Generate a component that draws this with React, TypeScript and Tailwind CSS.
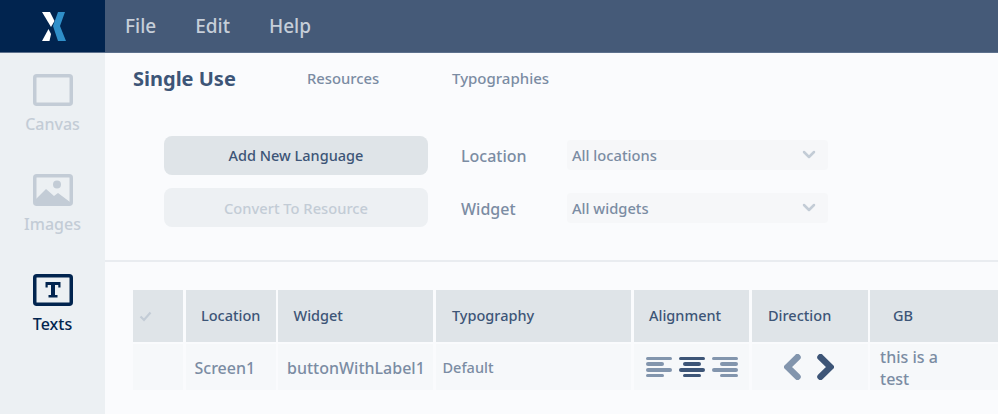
const FONT = "font-['Noto_Sans','Open_Sans',sans-serif]"

function Logo() {
    return (
        <svg width="24" height="29" viewBox="0 0 24 29">
            <path d="M0 0h8l4.5 9-3.5 6z" fill="#ffffff" />
            <path d="M0 29l6.5-12 2.5 5-1.5 7z" fill="#ffffff" />
            <path d="M16 0h7l-5 14 6 15h-8L11 14z" fill="#2f8fc9" />
        </svg>
    )
}

function CanvasIcon() {
    return (
        <svg width="40" height="32" viewBox="0 0 40 32">
            <rect x="1.75" y="1.75" width="36.5" height="28.5" rx="2" fill="none" stroke="#c3ccd6" strokeWidth="3.5" />
        </svg>
    )
}

function ImagesIcon() {
    return (
        <svg width="40" height="32" viewBox="0 0 40 32">
            <rect x="1.75" y="1.75" width="36.5" height="28.5" rx="2" fill="none" stroke="#c3ccd6" strokeWidth="3.5" />
            <circle cx="24" cy="10.5" r="4" fill="#c3ccd6" />
            <path d="M3 25l10-10 8 7 4-3 12 9v2H3z" fill="#c3ccd6" />
        </svg>
    )
}

function TextsIcon() {
    return (
        <svg width="40" height="32" viewBox="0 0 40 32">
            <rect x="1.75" y="1.75" width="36.5" height="28.5" rx="2" fill="none" stroke="#01244f" strokeWidth="3.5" />
            <path d="M12.500 8h15v5.500h-2.200V11h-3.300v10h2.500v2.500h-9V21H18V11h-3.300v2.500h-2.200z" fill="#01244f" />
        </svg>
    )
}

function AlignIcon({ widths, align, color }: { widths: number[]; align: string; color: string }) {
    return (
        <div className={`flex flex-col gap-[2px] w-[26.5px] ${align}`}>
            {widths.map((w, i) => (
                <div key={i} className={`h-[3.6px] rounded-full ${color}`} style={{ width: w }} />
            ))}
        </div>
    )
}

function Chevron({ left, color }: { left?: boolean; color: string }) {
    return (
        <svg width="17" height="26" viewBox="0 0 17 26">
            <path d={left ? 'M13.500 3.200L3.500 13l10 9.800' : 'M3.500 3.200l10 9.800-10 9.800'} fill="none" stroke={color} strokeWidth="6.500" strokeLinecap="round" strokeLinejoin="miter" />
        </svg>
    )
}

function Select({ label }: { label: string }) {
    return (
        <div className="w-[261px] h-[30px] bg-[#f6f7f9] rounded flex items-center justify-between pl-[5px] pr-[12px] text-[14.7px] font-medium text-[#7b8ca3]">
            {label}
            <svg width="14" height="10" viewBox="0 0 14 10">
                <path d="M2 2l5 5 5-5" fill="none" stroke="#c3ccd6" strokeWidth="2.500" strokeLinecap="round" strokeLinejoin="round" />
            </svg>
        </div>
    )
}

function SideItem({ label, active, children }: { label: string; active?: boolean; children: React.ReactNode }) {
    return (
        <div className="flex flex-col items-center h-[100px]">
            {children}
            <span className={`mt-[8px] text-[16px] font-medium leading-[20px] ${active ? 'text-[#01244f]' : 'text-[#c3ccd6]'}`}>{label}</span>
        </div>
    )
}

const headers = [
    { label: '', cls: '' },
    { label: 'Location', cls: 'pl-[15.5px]' },
    { label: 'Widget', cls: 'pl-[15.5px]' },
    { label: 'Typography', cls: 'pl-[16.5px]' },
    { label: 'Alignment', cls: 'pl-[15.5px]' },
    { label: 'Direction', cls: 'pl-[16.5px]' },
    { label: 'GB', cls: 'pl-[23px]' },
]

export default function App() {
    return (
        <div className={`w-[998px] h-[414px] overflow-hidden flex flex-col bg-[#fafbfd] ${FONT}`}>
            {/* Barra superior */}
            <div className="flex h-[53px] shrink-0 bg-[#455a78] border-b border-[#5d718d]">
                <div className="w-[105px] bg-[#01244f] flex items-center justify-center pl-[3px]">
                    <Logo />
                </div>
                <div className="flex items-center pl-[20px] gap-[39px] text-[19px] font-medium text-[#c6ced9]">
                    <span>File</span>
                    <span>Edit</span>
                    <span>Help</span>
                </div>
            </div>

            <div className="flex flex-1 min-h-0">
                {/* Menu lateral */}
                <div className="w-[105px] shrink-0 bg-[#ecf0f3] flex flex-col pt-[21px]">
                    <SideItem label="Canvas"><CanvasIcon /></SideItem>
                    <SideItem label="Images"><ImagesIcon /></SideItem>
                    <SideItem label="Texts" active><TextsIcon /></SideItem>
                </div>

                <div className="flex-1 min-w-0 flex flex-col">
                    {/* Pestañas */}
                    <div className="flex items-center h-[52px] pl-[28px] -mt-[1px]">
                        <span className="text-[20px] font-bold text-[#3d5577] w-[174px] pt-[2px]">Single Use</span>
                        <span className="text-[14.8px] font-medium text-[#7b8ca3] w-[145px]">Resources</span>
                        <span className="text-[15px] font-medium text-[#7b8ca3]">Typographies</span>
                    </div>

                    {/* Filtros */}
                    <div className="h-[158px] border-b-2 border-[#e9ecf0] pl-[59px] pt-[32px] flex gap-[33px]">
                        <div className="flex flex-col gap-[13px] w-[264px]">
                            <button className="h-[39px] rounded-lg bg-[#dfe4e8] text-[14.5px] font-medium text-[#3d5577]">Add New Language</button>
                            <button className="h-[39px] rounded-lg bg-[#edf0f3] pt-[2px] text-[14.7px] font-medium text-[#c3ccd6]">Convert To Resource</button>
                        </div>
                        <div className="flex flex-col gap-[23px] pt-[4px]">
                            <div className="flex items-center">
                                <span className="w-[106px] text-[16px] font-medium text-[#7b8ca3] pt-[2px]">Location</span>
                                <Select label="All locations" />
                            </div>
                            <div className="flex items-center">
                                <span className="w-[106px] text-[16px] font-medium text-[#7b8ca3] pt-[2px]">Widget</span>
                                <Select label="All widgets" />
                            </div>
                        </div>
                    </div>

                    {/* Tabla */}
                    <div className="pl-[28px] pt-[28px]">
                        <div className="grid grid-cols-[50px_90px_155px_195.5px_115.5px_116px_128px] gap-x-[2.5px] gap-y-[2px] grid-rows-[52px_46px]">
                            {headers.map((h, i) => (
                                <div key={i} className={`bg-[#dfe4e8] flex items-center text-[14.5px] font-medium text-[#3d5577] ${h.cls}`}>
                                    {i === 0 && (
                                        <svg className="ml-[6px]" width="13" height="11" viewBox="0 0 13 11">
                                            <path d="M1.500 5.500l3.500 3.500 6.500-7.500" fill="none" stroke="#c3ccd6" strokeWidth="2.200" />
                                        </svg>
                                    )}
                                    {h.label}
                                </div>
                            ))}
                            <div className="bg-[#f6f8fa]" />
                            <div className="bg-[#f6f8fa] flex items-center pl-[9px] pt-[2px] text-[16px] font-medium text-[#7b8ca3]">Screen1</div>
                            <div className="bg-[#f6f8fa] flex items-center pl-[9px] pt-[2px] text-[16px] font-medium text-[#7b8ca3]">buttonWithLabel1</div>
                            <div className="bg-[#f6f8fa] flex items-center pl-[7px] pt-[2px] text-[14.5px] font-medium text-[#7b8ca3]">Default</div>
                            <div className="bg-[#f6f8fa] flex items-center pl-[12px] gap-[6.500px]">
                                <AlignIcon widths={[26.5, 18.5, 26.5, 18.5]} align="items-start" color="bg-[#8295ad]" />
                                <AlignIcon widths={[26.5, 18.5, 26.5, 18.5]} align="items-center" color="bg-[#3d5577]" />
                                <AlignIcon widths={[26.5, 18.5, 26.5, 18.5]} align="items-end" color="bg-[#8295ad]" />
                            </div>
                            <div className="bg-[#f6f8fa] flex items-center justify-center gap-[16px] pr-[1px]">
                                <Chevron left color="#8295ad" />
                                <Chevron color="#3d5577" />
                            </div>
                            <div className="bg-[#f6f8fa] flex items-center pl-[10px] pt-[2px] text-[16px] leading-[22px] font-medium text-[#7b8ca3]">
                                <div className="w-[80px]">this is a test</div>
                            </div>
                        </div>
                    </div>
                </div>
            </div>
        </div>
    )
}
